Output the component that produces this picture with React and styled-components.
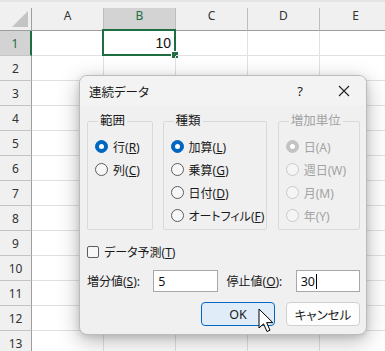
import React from 'react';
import styled, { createGlobalStyle } from 'styled-components';

const GlobalStyle = createGlobalStyle`
  html, body {
    margin: 0;
    padding: 0;
    background: #ffffff;
    overflow: hidden;
  }
  * { box-sizing: border-box; }
`;

const uiFont = `"Noto Sans", "Noto Sans CJK JP", sans-serif`;
const green = '#1e6e42';

const Sheet = styled.div`
  position: relative;
  width: 385px;
  height: 351px;
  overflow: hidden;
  background: #ffffff;
  font-family: ${uiFont};
`;

const TopStrip = styled.div`
  height: 8px;
  background: #f0f0f0;
  border-top: 2px solid #e4e4e4;
`;

const Grid = styled.div`
  display: grid;
  grid-template-columns: 32px repeat(5, 72px);
  grid-template-rows: 23px;
  grid-auto-rows: 25px;
`;

const Corner = styled.div`
  position: relative;
  background: #f0f0f0;
  border-right: 1px solid #9e9e9e;
  border-bottom: 1px solid #9e9e9e;

  &::after {
    content: '';
    position: absolute;
    right: 3px;
    bottom: 3px;
    width: 0;
    height: 0;
    border-left: 16px solid transparent;
    border-bottom: 16px solid #c4c4c4;
  }
`;

const ColHead = styled.div`
  background: ${(p) => (p.$active ? '#d3d3d3' : '#f0f0f0')};
  color: ${(p) => (p.$active ? green : '#333333')};
  border-right: 1px solid #bdbdbd;
  border-bottom: 1px solid #9e9e9e;
  font-size: 12px;
  text-align: center;
  line-height: 16px;
`;

const RowHead = styled.div`
  background: ${(p) => (p.$active ? '#d3d3d3' : '#f0f0f0')};
  color: ${(p) => (p.$active ? green : '#333333')};
  border-right: ${(p) => (p.$active ? `2px solid ${green}` : '1px solid #9e9e9e')};
  border-bottom: 1px solid #c4c4c4;
  font-size: 12px;
  display: flex;
  align-items: center;
  justify-content: center;
`;

const Cell = styled.div`
  position: relative;
  border-right: 1px solid #e1e1e1;
  border-bottom: 1px solid #e1e1e1;
  font-family: "Liberation Sans", "Noto Sans", sans-serif;
  font-size: 14px;
  color: #111111;
  text-align: right;
  padding-right: 4px;
  line-height: 24px;

  ${(p) =>
    p.$selected &&
    `
    &::before {
      content: '';
      position: absolute;
      left: -2px;
      top: -2px;
      right: -1px;
      bottom: -1px;
      border: 2px solid ${green};
      pointer-events: none;
    }
    &::after {
      content: '';
      position: absolute;
      right: -4px;
      bottom: -4px;
      width: 6px;
      height: 6px;
      background: ${green};
      border: 1px solid #ffffff;
    }
  `}
`;

const Dialog = styled.div`
  position: absolute;
  left: 79px;
  top: 75px;
  width: 288px;
  height: 260px;
  background: #f0f0f0;
  border: 1px solid #bcbcbc;
  border-radius: 8px;
  box-shadow: 0 6px 22px rgba(0, 0, 0, 0.28), 0 2px 6px rgba(0, 0, 0, 0.12);
  font-family: ${uiFont};
  font-feature-settings: 'palt';
  font-size: 12px;
  color: #1a1a1a;
  overflow: hidden;
`;

const TitleBar = styled.div`
  height: 30px;
  display: flex;
  align-items: center;
  background: #f3f3f3;
`;

const Title = styled.div`
  flex: 1;
  padding-left: 9px;
  font-size: 12.5px;
  color: #1a1a1a;
`;

const TitleButton = styled.div`
  width: 44px;
  height: 30px;
  display: flex;
  align-items: center;
  justify-content: center;
  font-size: 13px;
  color: #222;
`;

const Body = styled.div`
  padding: 0 6px 0 6px;
`;

const GroupRow = styled.div`
  display: flex;
  margin-top: 7px;
  height: 117px;
`;

const Group = styled.fieldset`
  margin: 0 0 0 ${(p) => p.$gap}px;
  width: ${(p) => p.$w}px;
  padding: 6px 0 0 7px;
  border: 1px solid #d9d9d9;
  border-radius: 2px;
  min-width: 0;
  color: ${(p) => (p.$disabled ? '#a3a3a3' : '#1a1a1a')};
`;

const Legend = styled.legend`
  padding: 0 2px;
  margin-left: 3px;
  line-height: 16px;
  font-size: 12.5px;
`;

const RadioRow = styled.div`
  height: 23px;
  display: flex;
  align-items: center;
  gap: 5px;
  white-space: nowrap;
`;

const RadioDot = styled.span`
  width: 13px;
  height: 13px;
  border-radius: 50%;
  flex: none;
  position: relative;
  background: ${(p) =>
    p.$checked ? (p.$disabled ? '#c3c3c3' : '#0067c0') : p.$disabled ? '#f5f5f5' : '#f7f7f7'};
  border: 1px solid
    ${(p) => (p.$checked ? (p.$disabled ? '#c3c3c3' : '#0067c0') : p.$disabled ? '#c9c9c9' : '#5c5c5c')};

  ${(p) =>
    p.$checked &&
    `
    &::after {
      content: '';
      position: absolute;
      left: 3px;
      top: 3px;
      width: 5px;
      height: 5px;
      border-radius: 50%;
      background: #ffffff;
    }
  `}
`;

const CheckRow = styled.div`
  margin-top: 12px;
  height: 20px;
  padding-left: 1px;
  display: flex;
  align-items: center;
  gap: 5px;
`;

const CheckBox = styled.span`
  width: 12px;
  height: 12px;
  border: 1px solid #5c5c5c;
  border-radius: 2px;
  background: #f7f7f7;
`;

const FieldRow = styled.div`
  margin-top: 8px;
  height: 22px;
  display: flex;
  align-items: center;
  padding-left: 1px;
`;

const FieldLabel = styled.span`
  width: ${(p) => p.$w}px;
  margin-left: ${(p) => p.$ml || 0}px;
  white-space: nowrap;
`;

const Input = styled.div`
  width: 65px;
  height: 22px;
  background: #ffffff;
  border: 1px solid #a8a8a8;
  font-size: 12.5px;
  padding-left: 4px;
  display: flex;
  align-items: center;
  color: #111;
`;

const Caret = styled.span`
  width: 1px;
  height: 15px;
  margin-left: 1px;
  background: #000;
`;

const ButtonRow = styled.div`
  margin-top: 10px;
  display: flex;
  justify-content: flex-end;
  gap: 11px;
`;

const Button = styled.div`
  width: 74px;
  height: 24px;
  border-radius: 4px;
  display: flex;
  align-items: center;
  justify-content: center;
  font-size: 12.5px;
  color: #1a1a1a;
  background: ${(p) => (p.$primary ? '#e0ecf8' : '#fdfdfd')};
  border: 1px solid ${(p) => (p.$primary ? '#0067c0' : '#d0d0d0')};
`;

const Cursor = styled.svg`
  position: absolute;
  left: 258px;
  top: 308px;
`;

const cols = ['A', 'B', 'C', 'D', 'E'];
const rows = Array.from({ length: 13 }, (_, i) => i + 1);

const Radio = ({ label, mnemonic, checked, disabled }) => (
  <RadioRow>
    <RadioDot $checked={checked} $disabled={disabled} />
    <span>
      {label}(
      {disabled ? mnemonic : <u>{mnemonic}</u>})
    </span>
  </RadioRow>
);

export default function App() {
  return (
    <Sheet>
      <GlobalStyle />
      <TopStrip />
      <Grid>
        <Corner />
        {cols.map((c) => (
          <ColHead key={c} $active={c === 'B'}>
            {c}
          </ColHead>
        ))}
        {rows.map((r) => (
          <React.Fragment key={r}>
            <RowHead $active={r === 1}>{r}</RowHead>
            {cols.map((c) => (
              <Cell key={c} $selected={r === 1 && c === 'B'}>
                {r === 1 && c === 'B' ? '10' : ''}
              </Cell>
            ))}
          </React.Fragment>
        ))}
      </Grid>

      <Dialog>
        <TitleBar>
          <Title>連続データ</Title>
          <TitleButton>?</TitleButton>
          <TitleButton>
            <svg width="12" height="12" viewBox="0 0 12 12">
              <path d="M1 1 L11 11 M11 1 L1 11" stroke="#222" strokeWidth="1.1" fill="none" />
            </svg>
          </TitleButton>
        </TitleBar>
        <Body>
          <GroupRow>
            <Group $w={66} $gap={1}>
              <Legend>範囲</Legend>
              <Radio label="行" mnemonic="R" checked />
              <Radio label="列" mnemonic="C" />
            </Group>
            <Group $w={105} $gap={10}>
              <Legend>種類</Legend>
              <Radio label="加算" mnemonic="L" checked />
              <Radio label="乗算" mnemonic="G" />
              <Radio label="日付" mnemonic="D" />
              <Radio label="オートフィル" mnemonic="F" />
            </Group>
            <Group $w={83} $gap={11} $disabled>
              <Legend>増加単位</Legend>
              <Radio label="日" mnemonic="A" checked disabled />
              <Radio label="週日" mnemonic="W" disabled />
              <Radio label="月" mnemonic="M" disabled />
              <Radio label="年" mnemonic="Y" disabled />
            </Group>
          </GroupRow>
          <CheckRow>
            <CheckBox />
            <span>
              データ予測(<u>T</u>)
            </span>
          </CheckRow>
          <FieldRow>
            <FieldLabel $w={67}>
              増分値(<u>S</u>):
            </FieldLabel>
            <Input>5</Input>
            <FieldLabel $w={70} $ml={9}>
              停止値(<u>O</u>):
            </FieldLabel>
            <Input>
              30
              <Caret />
            </Input>
          </FieldRow>
          <ButtonRow>
            <Button $primary>OK</Button>
            <Button>キャンセル</Button>
          </ButtonRow>
        </Body>
      </Dialog>

      <Cursor width="17" height="26" viewBox="0 0 17 26">
        <path
          d="M1 1 L1 20 L5.5 15.8 L9 23.5 L12 22.2 L8.6 14.6 L14.8 14.6 Z"
          fill="#ffffff"
          stroke="#000000"
          strokeWidth="1"
          strokeLinejoin="round"
        />
      </Cursor>
    </Sheet>
  );
}
